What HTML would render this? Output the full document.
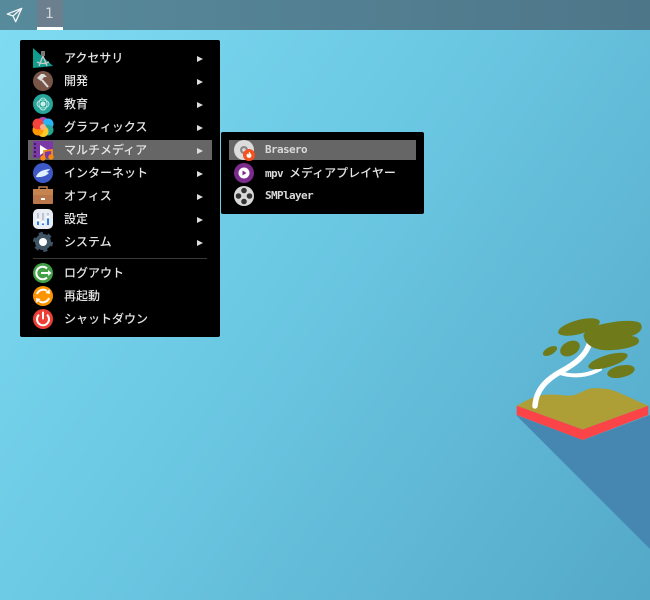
<!DOCTYPE html>
<html lang="ja"><head><meta charset="utf-8"><title>Desktop</title>
<style>
html,body{margin:0;padding:0}
body{width:650px;height:600px;overflow:hidden;position:relative;background:linear-gradient(125deg,#80dcf2 0%,#6bc8e3 45%,#54a8c8 100%);font-family:"DejaVu Sans Mono","Noto Sans CJK JP",monospace;}
svg{position:absolute;left:0;top:0}
.panel{position:absolute;left:0;top:0;width:650px;height:30px;background:linear-gradient(90deg,#578a9b,#4e7689)}
.ws{position:absolute;left:37px;top:0;width:26px;height:27px;background:#6c7f8e;border-bottom:3px solid #fff;color:#d0d8dc;font:14px/29px "DejaVu Sans",sans-serif;text-align:center;text-indent:-1px}
.menu{position:absolute;background:#000;border-radius:2px}
.t{position:absolute;color:#e4e4e4;font-size:12px;line-height:20px;white-space:nowrap;font-family:"Noto Sans CJK JP",sans-serif;font-weight:500}
.l{font:700 11px/20px "DejaVu Sans Mono",monospace;letter-spacing:-.62px;color:#d8d8d8}
.hl{position:absolute;background:#666}
.a{position:absolute;width:0;height:0;border-left:6px solid #ddd;border-top:3px solid transparent;border-bottom:3px solid transparent}
</style></head><body>
<svg width="650" height="600" viewBox="0 0 650 600">
<polygon points="516,415 583,440 650,415 650,549" fill="#4587b1"/>
<path d="M516.700 405.700 C526 401 533 396 543 395 C553 393.500 562 396 572 395.500 C580 394 586 388.500 593 388.300 C602 388 610 389 615 391 L648.300 405.700 L582.700 429.500 Z" fill="#ad9e36"/>
<polygon points="516.700,405.700 582.700,429.500 648.300,405.700 648.300,415 582.700,440 516.700,415" fill="#fb4447"/>
<g fill="none" stroke="#fff" stroke-linecap="round">
<path d="M535 406 C536 390 546 380 560 372 C575 364 586 356 590 342" stroke-width="5.500"/>
<path d="M560 373 C573 377 588 376 600 369" stroke-width="4"/>
</g>
<g fill="#6f7a1b">
<ellipse cx="579" cy="327" rx="21.500" ry="7" transform="rotate(-15 579 327)"/>
<path d="M583.500 335 C587 328 597 325 608 323 C620 320.500 636 320 640 323 C644 327 641 333 631.500 336 C640 337 641 342 636 345 C628 349 612 351 603 350 C592 349 584 343 583.500 335Z"/>
<ellipse cx="570" cy="348.500" rx="10.500" ry="7" transform="rotate(-28 570 348.500)"/>
<ellipse cx="550" cy="351" rx="7.800" ry="3.800" transform="rotate(-28 550 351)"/>
<ellipse cx="608" cy="361" rx="20.500" ry="6" transform="rotate(-17 608 361)"/>
<ellipse cx="621" cy="371.500" rx="14" ry="6" transform="rotate(-12 621 371.500)"/>
</g>
</svg>
<div class="panel"></div>
<div class="ws">1</div>
<svg width="24" height="24" style="left:0;top:3px" viewBox="0 0 24 24"><path d="M7.300 11 L21.700 5.300 L15.700 18.700 L13 13 Z M13 13 L21.700 5.300" fill="none" stroke="#f2f6f7" stroke-width="1.300" stroke-linejoin="round"/></svg>

<div class="menu" style="left:20px;top:40px;width:200px;height:297px"></div>
<div class="hl" style="left:28px;top:140px;width:184px;height:20px"></div>
<div style="position:absolute;left:33px;top:258px;width:174px;height:1px;background:#3a3a3a"></div>
<div class="menu" style="left:221px;top:132px;width:203px;height:82px"></div>
<div class="hl" style="left:229px;top:140px;width:187px;height:20px"></div>

<div class="t" style="left:64px;top:48px">アクセサリ</div>
<div class="t" style="left:64px;top:71px">開発</div>
<div class="t" style="left:64px;top:94px">教育</div>
<div class="t" style="left:64px;top:117px">グラフィックス</div>
<div class="t" style="left:64px;top:140px">マルチメディア</div>
<div class="t" style="left:64px;top:163px">インターネット</div>
<div class="t" style="left:64px;top:186px">オフィス</div>
<div class="t" style="left:64px;top:209px">設定</div>
<div class="t" style="left:64px;top:232px">システム</div>
<div class="t" style="left:64px;top:263px">ログアウト</div>
<div class="t" style="left:64px;top:286px">再起動</div>
<div class="t" style="left:64px;top:309px">シャットダウン</div>

<div class="a" style="left:197px;top:56px"></div>
<div class="a" style="left:197px;top:79px"></div>
<div class="a" style="left:197px;top:102px"></div>
<div class="a" style="left:197px;top:125px"></div>
<div class="a" style="left:197px;top:148px"></div>
<div class="a" style="left:197px;top:171px"></div>
<div class="a" style="left:197px;top:194px"></div>
<div class="a" style="left:197px;top:217px"></div>
<div class="a" style="left:197px;top:240px"></div>

<div class="t" style="left:265px;top:139px"><span class="l">Brasero</span></div>
<div class="t" style="left:265px;top:163px"><span class="l">mpv </span>メディアプレイヤー</div>
<div class="t" style="left:265px;top:185px"><span class="l">SMPlayer</span></div>

<svg width="650" height="600" viewBox="0 0 650 600">
<!-- accessories -->
<polygon points="33,48 33,68 53,66" fill="#0f9d8e"/>
<path d="M43 53v3M39 66l4-10 4 10M37 62q6 3 12 0" fill="none" stroke="#c8c8c8" stroke-width="1.300"/>
<rect x="41" y="51" width="4" height="5" fill="#777"/>
<!-- dev -->
<circle cx="43" cy="81" r="10" fill="#795548"/>
<path d="M42 80l6 7" stroke="#ddd" stroke-width="2"/><path d="M37 78l4-4 3 0 3 3-3 0-3 4z" fill="#ddd"/>
<!-- edu -->
<circle cx="43" cy="104" r="10" fill="#26a69a"/>
<circle cx="43" cy="104" r="2.500" fill="#cfeeea"/><ellipse cx="43" cy="104" rx="6" ry="4" fill="none" stroke="#cfeeea" stroke-width=".8"/><ellipse cx="43" cy="104" rx="4" ry="6" fill="none" stroke="#cfeeea" stroke-width=".8"/>
<!-- graphics -->
<circle cx="43" cy="122.500" r="5.500" fill="#ab47bc"/><circle cx="48" cy="124" r="5.500" fill="#29b6f6"/><circle cx="48" cy="130" r="5.500" fill="#26a69a"/><circle cx="43" cy="131.500" r="5.500" fill="#ffca28"/><circle cx="38" cy="130" r="5.500" fill="#ff9800"/><circle cx="38" cy="124" r="5.500" fill="#f4433c"/><circle cx="43" cy="127" r="3" fill="#f9b08a"/>
<!-- multimedia -->
<rect x="33" y="141" width="20" height="17" fill="#7b39a8"/>
<path d="M34 143h2v2h-2zM34 147h2v2h-2zM34 151h2v2h-2zM34 155h2v2h-2z" fill="#3f1a5e"/>
<polygon points="40,145 40,155 48,150" fill="#fff"/>
<path d="M44 158v-7l8-1v7" fill="none" stroke="#f98a11" stroke-width="1.800"/><circle cx="43" cy="158" r="2.700" fill="#f98a11"/><circle cx="51" cy="157" r="2.700" fill="#f98a11"/>
<!-- internet -->
<circle cx="43" cy="173" r="10" fill="#3d59c9"/>
<path d="M36 177q2-7 14-8-1 2-4 3 2 0 3 1-5 5-13 4z" fill="#dff1fb"/>
<!-- office -->
<path d="M39 190v-3h8v3" fill="none" stroke="#c17f4b" stroke-width="1.500"/>
<rect x="33" y="189" width="20" height="15" rx="1" fill="#b9764a"/><rect x="33" y="189" width="20" height="6" fill="#c4834f"/>
<rect x="41" y="198" width="4" height="2" fill="#fff"/>
<!-- settings -->
<rect x="33" y="209" width="20" height="20" rx="5" fill="#e8edf3"/>
<path d="M38 213v12M43 213v12M48 213v12" stroke="#b0b8c4" stroke-width="1.500"/><path d="M38 221v4M43 223v2M48 218v7" stroke="#2f7de1" stroke-width="2"/>
<circle cx="38" cy="220" r="1.500" fill="#fff"/><circle cx="43" cy="222" r="1.500" fill="#fff"/><circle cx="48" cy="217" r="1.500" fill="#fff"/>
<!-- system -->
<circle cx="43" cy="242" r="8" fill="#3f5566"/>
<circle cx="43" cy="242" r="8" fill="none" stroke="#3f5566" stroke-width="4" stroke-dasharray="3.800 4.580"/>
<circle cx="43" cy="242" r="4" fill="#fff"/>
<!-- logout -->
<circle cx="43" cy="273" r="10" fill="#43a047"/>
<path d="M47 268.500a6.300 6.300 0 1 0 0 9" fill="none" stroke="#fff" stroke-width="2"/><path d="M41 273h8" stroke="#fff" stroke-width="2"/><path d="M48 270l3.500 3-3.500 3z" fill="#fff"/>
<!-- reboot -->
<circle cx="43" cy="296" r="10" fill="#fb9400"/>
<path d="M37 294a6.500 6.500 0 0 1 10-3M49 298a6.500 6.500 0 0 1-10 3" fill="none" stroke="#fff" stroke-width="2"/><path d="M45.500 293l4-4 .5 5zM40.500 299l-4 4-.5-5z" fill="#fff"/>
<!-- shutdown -->
<circle cx="43" cy="319" r="10" fill="#ef3e36"/>
<path d="M39 314.800a6 6 0 1 0 8 0" fill="none" stroke="#fff" stroke-width="2"/><path d="M43 312.500v6" stroke="#fff" stroke-width="2" stroke-linecap="round"/>
<!-- brasero -->
<circle cx="244" cy="150" r="10" fill="#dcdcdc"/><circle cx="244" cy="150" r="4" fill="#888"/><circle cx="244" cy="150" r="1.800" fill="#ddd"/>
<circle cx="249" cy="155" r="6" fill="#f4511e"/><path d="M249 151.500c1 1.500 2.500 2.500 2.500 4a2.500 2.500 0 0 1-5 0c0-1 .5-1.500 1-2 .3.700.7 1 1 1z" fill="#fff"/>
<!-- mpv -->
<circle cx="244" cy="173" r="10" fill="#7b2b8b"/><circle cx="244" cy="173" r="5.500" fill="#fff"/><polygon points="242.500,170.500 242.500,175.500 246.500,173" fill="#7b2b8b"/>
<!-- smplayer -->
<circle cx="244" cy="196" r="10" fill="#d8d8d8"/>
<g fill="#333"><circle cx="244" cy="190.500" r="2.800"/><circle cx="244" cy="201.500" r="2.800"/><circle cx="238.500" cy="196" r="2.800"/><circle cx="249.500" cy="196" r="2.800"/></g>
</svg>
</body></html>
